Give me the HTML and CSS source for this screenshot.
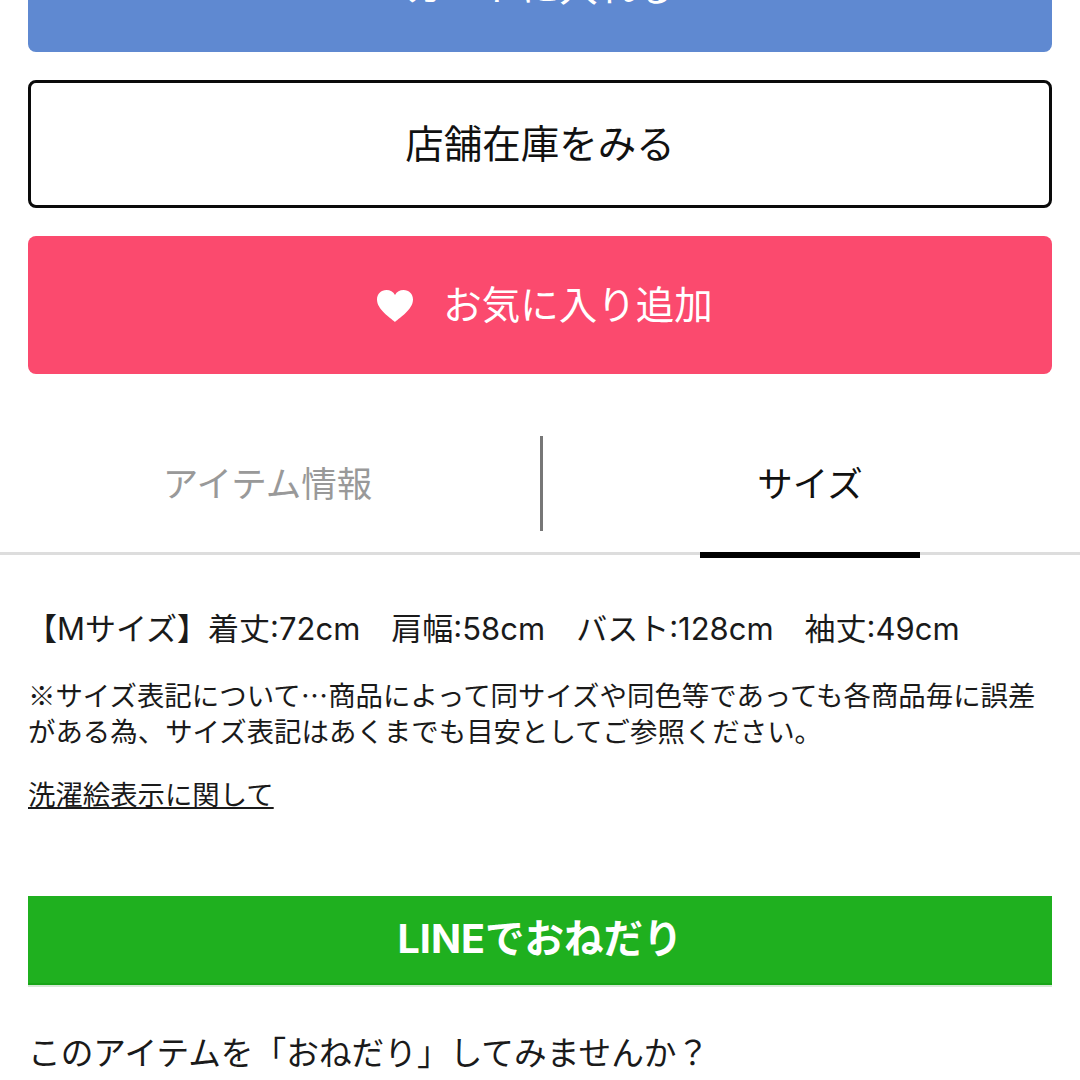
FILE: index.html
```html
<!DOCTYPE html>
<html lang="ja">

<head>
    <meta charset="UTF-8">
    <title>サイズ</title>
    <link rel="stylesheet" href="styles.css">
</head>

<body>
    <div id="page">
        <div class="actions">
            <a class="btn btn-cart" href="#">カートに入れる</a>
            <a class="btn btn-stock" href="#">店舗在庫をみる</a>
            <a class="btn btn-fav" href="#">
                <svg class="heart" viewBox="0 0 36 32" width="36" height="32">
                    <path d="M18 32C13 27.500 0 19.500 0 9.500 0 4 4 0 9.500 0 13 0 16.300 1.800 18 5 19.700 1.800 23 0 26.500 0 32 0 36 4 36 9.500 36 19.500 23 27.500 18 32Z" fill="#fff" />
                </svg>
                お気に入り追加
            </a>
        </div>

        <div class="tabs">
            <div class="tab">アイテム情報</div>
            <div class="tab active">サイズ</div>
        </div>

        <div class="size-info">
            <p class="size-line">【Mサイズ】着丈:72cm　肩幅:58cm　バスト:128cm　袖丈:49cm</p>
            <p class="note">※サイズ表記について…商品によって同サイズや同色等であっても各商品毎に誤差がある為、サイズ表記はあくまでも目安としてご参照ください。</p>
            <a class="wash-link" href="#">洗濯絵表示に関して</a>
        </div>

        <a class="line-btn" href="#">LINEでおねだり</a>
        <p class="line-text">このアイテムを「おねだり」してみませんか？</p>
    </div>
</body>

</html>
```

FILE: styles.css
```css
* {
    box-sizing: border-box;
}

html,
body {
    margin: 0;
    height: 1080px;
    overflow: hidden;
    background-color: #fff;
}

body {
    font-family: Inter, "Noto Sans CJK JP", sans-serif;
    color: #1a1a1a;
}

a {
    text-decoration: none;
    color: inherit;
}

p {
    margin: 0;
}

#page {
    height: 1080px;
    overflow: hidden;
}

.actions {
    display: flex;
    flex-direction: column;
    gap: 28px;
    padding: 0 28px;
    margin-top: -85px;
}

.btn {
    display: flex;
    align-items: center;
    justify-content: center;
    border-radius: 8px;
    font-size: 38.500px;
}

.btn-cart {
    height: 137px;
    background-color: #5f89d1;
    color: #fff;
}

.btn-stock {
    height: 128px;
    padding-bottom: 6px;
    border: 3px solid #0a0a0a;
    background-color: #fff;
    color: #111;
}

.btn-fav {
    height: 138px;
    gap: 30px;
    padding: 0 0 6px 10px;
    background-color: #fb4a6e;
    color: #fff;
}

.heart {
    flex: none;
    margin-top: 8px;
}

.tabs {
    display: grid;
    grid-template-columns: 1fr 1fr;
    height: 119px;
    margin-top: 62px;
    border-bottom: 3px solid #ddd;
    padding-bottom: 21px;
}

.tab {
    position: relative;
    display: flex;
    align-items: center;
    justify-content: center;
    padding-bottom: 4px;
    font-size: 35.500px;
    color: #999;
}

.tab:first-child {
    padding-right: 5px;
}

.tab.active {
    padding-right: 3px;
    border-left: 3px solid #777;
    color: #111;
}

.tab.active::after {
    content: "";
    position: absolute;
    left: 50%;
    bottom: -27px;
    width: 220px;
    height: 6px;
    margin-left: -111.500px;
    background-color: #000;
}

.size-info {
    padding: 52px 28px 0;
}

.size-line {
    margin-left: -2px;
    font-size: 31px;
    line-height: 44px;
    white-space: nowrap;
}

.note {
    margin-top: 25px;
    font-family: "Noto Sans CJK JP", sans-serif;
    font-size: 27.450px;
    line-height: 36px;
}

.wash-link {
    display: inline-block;
    margin-top: 29px;
    font-size: 27.400px;
    line-height: 36px;
    text-decoration: underline;
}

.line-btn {
    display: flex;
    align-items: center;
    justify-content: center;
    height: 89px;
    margin: 83px 28px 0;
    padding-bottom: 8px;
    background-color: #1fb01f;
    border-bottom: 2px solid #17a517;
    box-shadow: 0 2px 0 #d6e8d6;
    color: #fff;
    font-size: 39.500px;
    font-weight: bold;
}

.line-text {
    margin: 44px 0 0 28px;
    font-size: 32.700px;
    line-height: 48px;
}
```
